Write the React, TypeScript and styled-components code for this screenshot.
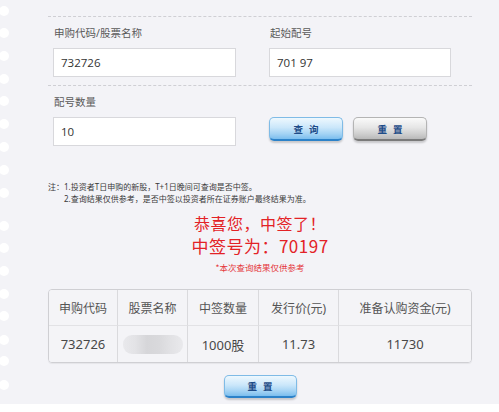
import React from "react";
import styled, { createGlobalStyle } from "styled-components";

const GlobalStyle = createGlobalStyle`
  html, body {
    margin: 0;
    padding: 0;
    background: #ffffff;
  }
  body {
    font-family: "Noto Sans", "Noto Sans CJK SC", sans-serif;
    color: #333;
  }
`;

const CJK = `"Noto Sans", "Noto Sans CJK SC", sans-serif`;

const Page = styled.div`
  display: flex;
  width: 499px;
  height: 404px;
  background: #f3f3f7;
  overflow: hidden;
`;

const HoleStrip = styled.div`
  display: flex;
  flex-direction: column;
  width: 48px;
  flex-shrink: 0;
`;

const Hole = styled.span<{ $offset: number }>`
  display: block;
  width: 10px;
  height: 10px;
  margin-left: -1px;
  margin-top: ${({ $offset }) => $offset}px;
  border-radius: 50%;
  background: #ffffff;
`;

const Main = styled.div`
  display: flex;
  flex-direction: column;
  width: 424px;
  padding-top: 16px;
`;

const Section = styled.div`
  display: grid;
  grid-template-columns: 183px 182px;
  column-gap: 33px;
  padding: 8px 0 8px 5px;
  border-top: 1px dashed #cfcfd4;
  &:last-of-type {
    border-bottom: 1px dashed #cfcfd4;
  }
`;

const Field = styled.div`
  display: flex;
  flex-direction: column;
`;

const Label = styled.div`
  font-family: ${CJK};
  font-size: 10.5px;
  line-height: 16px;
  color: #5a5a5a;
  padding-left: 1px;
  margin-bottom: 7px;
`;

const Input = styled.div`
  box-sizing: border-box;
  height: 29px;
  display: flex;
  align-items: center;
  padding-left: 7px;
  background: #ffffff;
  border: 1px solid #d8d8dc;
  font-family: "Open Sans", "Noto Sans", sans-serif;
  font-size: 11.5px;
  color: #333;
`;

const ButtonRow = styled.div`
  display: flex;
  gap: 10px;
  align-items: flex-start;
  padding-top: 23px;
`;

const Button = styled.div<{ $tone: "blue" | "gray"; $w?: number; $h?: number }>`
  box-sizing: border-box;
  width: ${({ $w }) => $w ?? 74}px;
  height: ${({ $h }) => $h ?? 24}px;
  display: flex;
  align-items: center;
  justify-content: center;
  border-radius: 5px;
  font-family: ${CJK};
  font-size: 9.5px;
  font-weight: 700;
  letter-spacing: 6px;
  text-indent: 6px;
  color: #1e4c88;
  border: 1px solid ${({ $tone }) => ($tone === "blue" ? "#7fbbe6" : "#b4b4b4")};
  border-bottom: 2px solid ${({ $tone }) => ($tone === "blue" ? "#2c82c9" : "#7a7a7a")};
  background: ${({ $tone }) =>
    $tone === "blue"
      ? "linear-gradient(#eef8fe 0%, #cbe7fa 45%, #a4d3f4 75%, #7cbeee 100%)"
      : "linear-gradient(#fafafa 0%, #e6e6e6 45%, #cfcfcf 75%, #b9b9b9 100%)"};
  box-shadow: 0 2px 2px rgba(0, 0, 0, 0.18);
`;

const Notes = styled.div`
  display: flex;
  margin-top: 27px;
  font-family: ${CJK};
  font-size: 8px;
  line-height: 12px;
  color: #3a3a3a;
`;

const NoteLines = styled.div`
  display: flex;
  flex-direction: column;
`;

const Result = styled.div`
  display: flex;
  flex-direction: column;
  align-items: center;
  margin-top: 7px;
  color: #e32226;
  font-family: "Noto Sans CJK SC", sans-serif;
`;

const Headline = styled.div<{ $size: number; $lh: number }>`
  font-size: ${({ $size }) => $size}px;
  line-height: ${({ $lh }) => $lh}px;
  font-weight: 400;
  letter-spacing: 0.5px;
`;

const Hint = styled.div`
  font-size: 8.5px;
  line-height: 12px;
  margin-top: 4px;
  color: #e5383c;
`;

const Table = styled.div`
  display: grid;
  grid-template-columns: 69px 70px 71px 80px 1fr;
  margin-top: 16px;
  border: 1px solid #cfcfd3;
  border-radius: 4px;
  overflow: hidden;
  box-shadow: 0 1px 1px rgba(0, 0, 0, 0.06);
`;

const Cell = styled.div<{ $head?: boolean; $last?: boolean }>`
  height: ${({ $head }) => ($head ? 35 : 36)}px;
  display: flex;
  align-items: center;
  justify-content: center;
  font-family: ${CJK};
  font-size: ${({ $head }) => ($head ? 12 : 13)}px;
  color: ${({ $head }) => ($head ? "#555" : "#484848")};
  background: #f4f4f7;
  border-right: ${({ $last }) => ($last ? "none" : "1px solid #dadadd")};
  border-bottom: ${({ $head }) => ($head ? "1px solid #e2e2e5" : "none")};
`;

const Blurred = styled.div`
  width: 60px;
  height: 19px;
  border-radius: 9px;
  background: linear-gradient(
    90deg,
    #e9e9ec 0%,
    #e3e3e6 20%,
    #d6d6d9 40%,
    #d9d9dc 60%,
    #e2e2e5 80%,
    #e9e9ec 100%
  );
  filter: blur(0.6px);
`;

const Footer = styled.div`
  display: flex;
  justify-content: center;
  margin-top: 12px;
`;

const holeTops = [6, 28, 51, 74, 96, 119, 142, 165, 188, 221, 243, 266, 289, 311, 335, 356, 380];

const headers = ["申购代码", "股票名称", "中签数量", "发行价(元)", "准备认购资金(元)"];

export default function App() {
  return (
    <>
      <GlobalStyle />
      <Page>
        <HoleStrip>
          {holeTops.map((top, i) => (
            <Hole key={top} $offset={i === 0 ? top : top - holeTops[i - 1] - 10} />
          ))}
        </HoleStrip>
        <Main>
          <Section>
            <Field>
              <Label>申购代码/股票名称</Label>
              <Input>732726</Input>
            </Field>
            <Field>
              <Label>起始配号</Label>
              <Input>701 97</Input>
            </Field>
          </Section>
          <Section>
            <Field>
              <Label>配号数量</Label>
              <Input>10</Input>
            </Field>
            <ButtonRow>
              <Button $tone="blue">查询</Button>
              <Button $tone="gray">重置</Button>
            </ButtonRow>
          </Section>

          <Notes>
            <span>注：</span>
            <NoteLines>
              <span>1.投资者T日申购的新股，T+1日晚间可查询是否中签。</span>
              <span>2.查询结果仅供参考，是否中签以投资者所在证券账户最终结果为准。</span>
            </NoteLines>
          </Notes>

          <Result>
            <Headline $size={16} $lh={22}>恭喜您，中签了！</Headline>
            <Headline $size={17} $lh={23}>中签号为：70197</Headline>
            <Hint>*本次查询结果仅供参考</Hint>
          </Result>

          <Table>
            {headers.map((h, i) => (
              <Cell key={h} $head $last={i === headers.length - 1}>
                {h}
              </Cell>
            ))}
            <Cell>732726</Cell>
            <Cell>
              <Blurred />
            </Cell>
            <Cell>1000股</Cell>
            <Cell>11.73</Cell>
            <Cell $last>11730</Cell>
          </Table>

          <Footer>
            <Button $tone="blue" $w={73} $h={23}>重置</Button>
          </Footer>
        </Main>
      </Page>
    </>
  );
}
